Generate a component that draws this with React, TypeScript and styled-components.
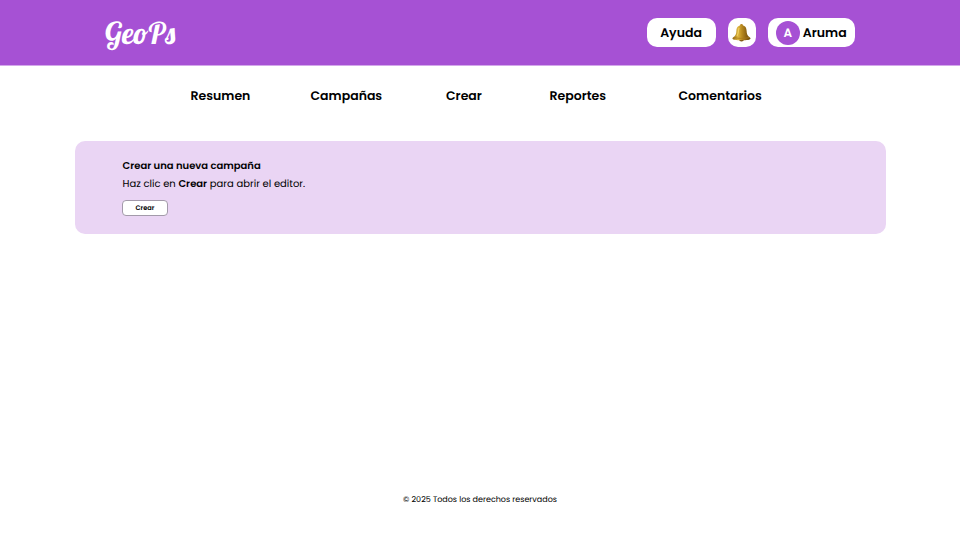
import React from "react";
import styled, { createGlobalStyle } from "styled-components";

const GlobalStyle = createGlobalStyle`
  * { box-sizing: border-box; }
  body {
    margin: 0;
    background: #fff;
    color: #000;
    font-family: Poppins, Inter, "Open Sans", sans-serif;
    font-feature-settings: "cv11";
    text-rendering: geometricPrecision;
  }
`;

const Page = styled.div`
  display: flex;
  flex-direction: column;
  width: 100%;
  height: 538px;
`;

const Header = styled.header`
  display: flex;
  justify-content: space-between;
  align-items: flex-start;
  height: 65.5px;
  padding: 18px 105px 0;
  background: linear-gradient(#a651d4 65px, #d3a8ea 65px);
`;

const Logo = styled.div`
  color: #fff;
  font: normal 400 30px/30px Lobster, "Liberation Serif", serif;
`;

const Actions = styled.div`
  display: flex;
  gap: 12px;
`;

const Pill = styled.button<{ $width: number }>`
  display: flex;
  align-items: center;
  justify-content: center;
  gap: 3px;
  width: ${(p) => p.$width}px;
  height: 29px;
  padding: 0;
  border: 0;
  border-radius: 10px;
  background: #fff;
  color: #000;
  font: inherit;
  font-feature-settings: inherit;
  text-rendering: inherit;
  font-size: 12.5px;
  font-weight: 600;
  white-space: nowrap;
`;

const PillText = styled.span`
  line-height: 19px;
  padding-top: 2px;
`;

const Avatar = styled.span`
  display: grid;
  place-items: center;
  width: 24px;
  height: 24px;
  padding-top: 2px;
  border-radius: 50%;
  background: #a651d4;
  color: #fff;
  font-size: 12px;
  line-height: 18px;
`;

const Nav = styled.nav`
  display: grid;
  grid-template-columns: 120px 135.5px 103.5px 129px 90px;
  padding: 21px 0 0 190.5px;
  height: 75.5px;
`;

const NavLink = styled.a`
  font-size: 12.5px;
  line-height: 20px;
  font-weight: 600;
  white-space: nowrap;
`;

const Card = styled.section`
  width: 810.5px;
  height: 92.5px;
  margin-left: 75px;
  padding: 16px 47.5px;
  border-radius: 10px;
  background: #ead5f4;
`;

const Title = styled.h2`
  margin: 0;
  font-size: 10px;
  line-height: 18px;
  font-weight: 600;
`;

const Description = styled.p`
  margin: 0;
  font-size: 10px;
  line-height: 17px;

  b { font-weight: 600; }
`;

const CreateButton = styled.button`
  display: block;
  width: 46px;
  height: 16px;
  margin: 8px 0 0 -0.5px;
  padding: 1px 0 0;
  border: 1px solid #a39aaa;
  border-radius: 4px;
  background: #fff;
  color: #000;
  font: inherit;
  font-feature-settings: inherit;
  text-rendering: inherit;
  font-size: 6.6px;
  line-height: 13px;
  font-weight: 600;
`;

const Footer = styled.footer`
  margin-top: auto;
  height: 47px;
  font-size: 8px;
  line-height: 17px;
  text-align: center;
`;

const links = ["Resumen", "Campañas", "Crear", "Reportes", "Comentarios"];

function BellIcon() {
  return (
    <svg width="20" height="20" viewBox="0 0 20 20" aria-hidden="true">
      <defs>
        <linearGradient id="brass" x1="0" x2="1">
          <stop offset="0" stopColor="#8c6410" />
          <stop offset="0.3" stopColor="#e0b840" />
          <stop offset="0.52" stopColor="#b88a20" />
          <stop offset="0.78" stopColor="#8a6112" />
          <stop offset="1" stopColor="#6b490d" />
        </linearGradient>
      </defs>
      <circle cx="9.5" cy="2.3" r="1.4" fill="#b48420" />
      <ellipse cx="9.5" cy="16.6" rx="2.4" ry="2" fill="#714b0d" />
      <path
        d="M9.5 2.3C5.9 2.3 4.6 4.7 4.4 7.7c-.2 3.1-.5 4.4-2.3 6-.8.6-1.6 1-1.6 1.7 0 1.2 3.5 1.9 9 1.9s9-.7 9-1.9c0-.7-.8-1.1-1.6-1.7-1.8-1.6-2.1-2.9-2.3-6-.2-3-1.5-5.4-5.1-5.4Z"
        fill="url(#brass)"
      />
      <path d="M1.5 14.4c4 1.3 12 1.3 16 0" fill="none" stroke="#a97a1a" strokeWidth="0.8" />
      <path d="M7 5c-.7 2.8-.5 5.3-2 8" fill="none" stroke="#f5d568" strokeWidth="0.9" />
    </svg>
  );
}

export default function App() {
  return (
    <Page>
      <GlobalStyle />
      <Header>
        <Logo>GeoPs</Logo>
        <Actions>
          <Pill $width={69}>
            <PillText>Ayuda</PillText>
          </Pill>
          <Pill $width={28} aria-label="Notificaciones">
            <BellIcon />
          </Pill>
          <Pill $width={87.5}>
            <Avatar>A</Avatar>
            <PillText>Aruma</PillText>
          </Pill>
        </Actions>
      </Header>
      <Nav>
        {links.map((label) => (
          <NavLink key={label}>{label}</NavLink>
        ))}
      </Nav>
      <Card>
        <Title>Crear una nueva campaña</Title>
        <Description>
          Haz clic en <b>Crear</b> para abrir el editor.
        </Description>
        <CreateButton>Crear</CreateButton>
      </Card>
      <Footer>© 2025 Todos los derechos reservados</Footer>
    </Page>
  );
}
